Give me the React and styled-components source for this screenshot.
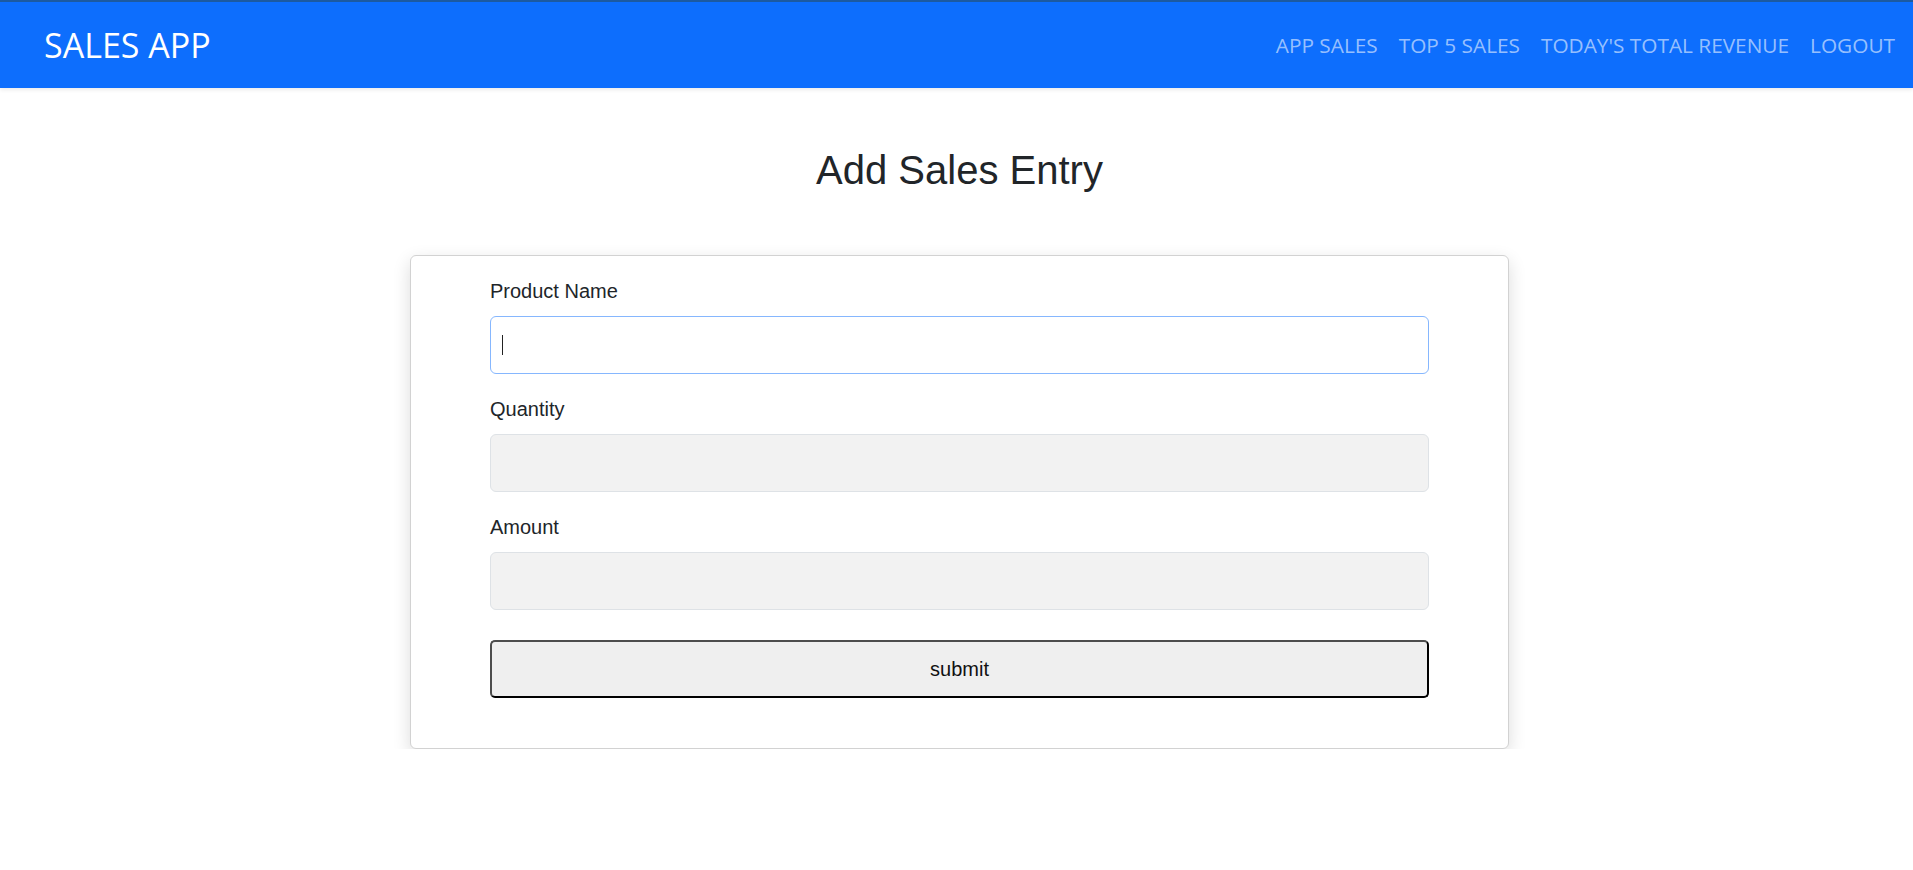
import React from 'react'
import styled, { createGlobalStyle } from 'styled-components'

const GlobalStyle = createGlobalStyle`
    html, body {
        margin: 0;
        padding: 0;
        background: #fff;
        font-family: "Liberation Sans", Arial, sans-serif;
        color: #212529;
    }
    * {
        box-sizing: border-box;
    }
`

const Navbar = styled.nav`
    height: 88px;
    background: #0d6efd;
    border-top: 2px solid #1c5aa0;
    box-shadow: 0 2px 4px rgba(0, 0, 0, 0.08);
    display: flex;
    align-items: center;
    justify-content: space-between;
    padding: 0 18px 0 44px;
    font-family: "Open Sans", "Noto Sans", sans-serif;
`

const Brand = styled.a`
    color: #fff;
    font-size: 34px;
    line-height: 1;
    text-decoration: none;
`

const NavLinks = styled.div`
    display: flex;
    align-items: center;
    gap: 21px;
`

const NavLink = styled.a`
    color: rgba(255, 255, 255, 0.58);
    font-size: 20.8px;
    line-height: 1;
    text-decoration: none;
    white-space: nowrap;
`

const Main = styled.main`
    display: flex;
    flex-direction: column;
    align-items: center;
    padding: 58px 0 0 6px;
`

const Title = styled.h1`
    margin: 0 0 61px;
    font-size: 40px;
    font-weight: 400;
    line-height: 48px;
    color: #212529;
`

const Card = styled.div`
    width: 1099px;
    border: 1px solid #d2d2d2;
    border-radius: 6px;
    background: #fff;
    box-shadow: 0 6px 18px rgba(0, 0, 0, 0.14);
    padding: 20px 79px 50px;
`

const Form = styled.form`
    display: flex;
    flex-direction: column;
`

const Field = styled.div`
    display: flex;
    flex-direction: column;
    gap: 10px;
    margin-bottom: 20px;
`

const Label = styled.label`
    font-size: 20px;
    line-height: 30px;
    color: #212529;
`

const InputWrap = styled.div`
    position: relative;
`

const Input = styled.input`
    width: 100%;
    height: 58px;
    padding: 0 12px;
    font-size: 20px;
    font-family: inherit;
    border-radius: 6px;
    border: 1px solid ${p => (p.$focused ? '#86b7fe' : '#dee2e6')};
    background: ${p => (p.$focused ? '#fff' : '#f2f2f2')};
    outline: none;
`

const Caret = styled.span`
    position: absolute;
    left: 12px;
    top: 19px;
    width: 1px;
    height: 20px;
    background: #222;
`

const SubmitButton = styled.button`
    margin-top: 10px;
    height: 58px;
    width: 100%;
    background: #efefef;
    border: 2px solid;
    border-color: #4d4d4d #000 #000 #4d4d4d;
    border-radius: 5px;
    font-family: "Liberation Sans", Arial, sans-serif;
    font-size: 20px;
    color: #111;
`

const fields = [
    { id: 'product', label: 'Product Name', focused: true },
    { id: 'quantity', label: 'Quantity' },
    { id: 'amount', label: 'Amount' },
]

const App = () => {
    return (
        <>
            <GlobalStyle />
            <Navbar>
                <Brand href="#">SALES APP</Brand>
                <NavLinks>
                    <NavLink href="#">APP SALES</NavLink>
                    <NavLink href="#">TOP 5 SALES</NavLink>
                    <NavLink href="#">TODAY'S TOTAL REVENUE</NavLink>
                    <NavLink href="#">LOGOUT</NavLink>
                </NavLinks>
            </Navbar>
            <Main>
                <Title>Add Sales Entry</Title>
                <Card>
                    <Form onSubmit={e => e.preventDefault()}>
                        {fields.map(f => (
                            <Field key={f.id}>
                                <Label htmlFor={f.id}>{f.label}</Label>
                                <InputWrap>
                                    <Input id={f.id} $focused={f.focused} />
                                    {f.focused && <Caret />}
                                </InputWrap>
                            </Field>
                        ))}
                        <SubmitButton type="submit">submit</SubmitButton>
                    </Form>
                </Card>
            </Main>
        </>
    )
}

export default App
